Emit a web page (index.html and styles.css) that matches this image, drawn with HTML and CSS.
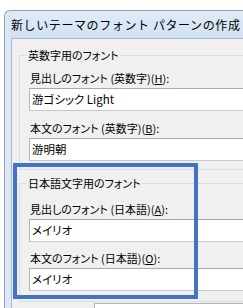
FILE: index.html
```html
<!DOCTYPE html>
<html lang="ja">
<head>
<meta charset="utf-8">
<link rel="stylesheet" href="styles.css">
</head>
<body>
<div class="window">
  <div class="titlebar">新しいテーマのフォント パターンの作成</div>
  <div class="client">
    <fieldset class="group group-latin">
      <legend>英数字用のフォント</legend>
      <div class="field-label first">見出しのフォント (英数字)(<u>H</u>):</div>
      <div class="input">游ゴシック Light</div>
      <div class="field-label">本文のフォント (英数字)(<u>B</u>):</div>
      <div class="input">游明朝</div>
    </fieldset>
    <fieldset class="group group-ja">
      <legend>日本語文字用のフォント</legend>
      <div class="field-label first">見出しのフォント (日本語)(<u>A</u>):</div>
      <div class="input">メイリオ</div>
      <div class="field-label second">本文のフォント (日本語)(<u>O</u>):</div>
      <div class="input">メイリオ</div>
    </fieldset>
    <div class="name-row"><div class="name-input"></div></div>
  </div>
</div>
<div class="highlight"></div>
</body>
</html>
```
FILE: styles.css
```css
html, body {
  margin: 0;
  padding: 0;
  background: #ffffff;
  overflow: hidden;
  width: 243px;
  height: 308px;
}
body {
  font-family: "Meiryo UI", "Noto Sans CJK JP", sans-serif;
  font-size: 11px;
  color: #000;
}
.window {
  margin: 10px 0 0 4px;
  width: 400px;
  border: 1px solid #8ea1b9;
  border-right: none;
  border-bottom: none;
  border-radius: 6px 0 0 0;
  background: #dbe7f5;
  padding-left: 6px;
}
.titlebar {
  height: 27px;
  line-height: 27px;
  font-size: 12px;
  letter-spacing: 0.6px;
  background: linear-gradient(#e1ebf7, #d2e1f3);
  white-space: nowrap;
}
.client {
  background: #f0f0f0;
  border-top: 1px solid #a9b8ca;
  border-left: 1px solid #a9b8ca;
  padding: 8px 0 0 7px;
  height: 300px;
  font-feature-settings: "palt";
}
.group {
  margin: 0;
  border: 1px solid #d5dfe5;
  border-right: none;
  padding: 0 0 0 9px;
  width: 380px;
}
.group legend {
  padding: 0 1px;
  margin-left: -2px;
  line-height: 16px;
}
.group-latin {
  padding-bottom: 8px;
}
.group-ja {
  margin-top: 5px;
  padding-bottom: 10px;
}
.field-label {
  line-height: 14px;
  margin-top: 10px;
  padding-left: 1px;
  white-space: nowrap;
}
.group-latin .field-label.first {
  margin-top: 8px;
}
.group-ja .field-label.first {
  margin-top: 11px;
}
.group-ja .field-label.second {
  margin-top: 9px;
}
.input {
  margin-top: 3px;
  height: 21px;
  line-height: 21px;
  width: 300px;
  background: #fff;
  border: 1px solid #b4b4b4;
  border-color: #a9a9a9 #c9c9c9 #c9c9c9 #b4b4b4;
  padding-left: 2px;
  white-space: nowrap;
  font-size: 11.5px;
}
.name-row {
  padding: 1px 0 0 75px;
}
.name-input {
  height: 20px;
  border: 1px solid #b4b4b4;
  background: #fff;
}
.highlight {
  position: absolute;
  left: 13px;
  top: 163px;
  width: 185px;
  height: 136px;
  box-sizing: border-box;
  border: 4px solid #4472c4;
}
```
